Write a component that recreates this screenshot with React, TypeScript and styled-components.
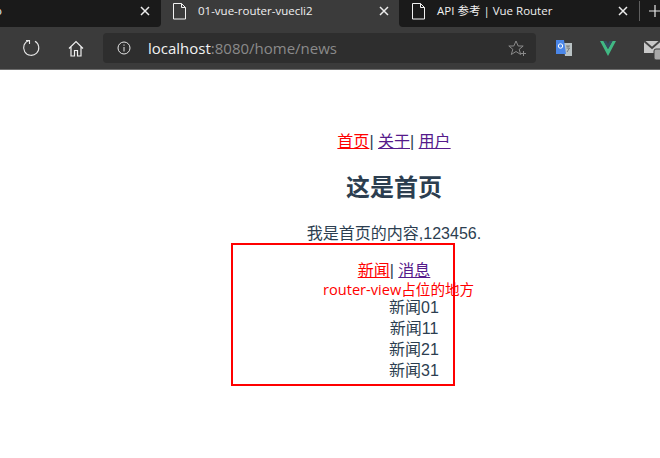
import React from "react";
import styled, { createGlobalStyle } from "styled-components";

const Global = createGlobalStyle`
  html, body { margin: 0; padding: 0; width: 660px; height: 458px; overflow: hidden; background: #fff; }
  body { font-family: "Liberation Sans", "Noto Sans CJK SC", sans-serif; }
`;
const Page = styled.div`width: 660px; height: 458px; position: relative; overflow: hidden;`;
const TabStrip = styled.div`height: 27px; background: #3b3b3b; display: flex; font-family: "Open Sans", "Noto Sans CJK SC", sans-serif;`;
const Tab = styled.div<{ $pad: number }>`
  height: 27px; flex: none; box-sizing: border-box; display: flex; align-items: center;
  color: #f0f0f0; font-size: 11.5px; padding: 0 0 5px ${p => p.$pad}px; white-space: nowrap;
`;
const FirstTab = styled(Tab)`width: 161px; background: #1a1a1a; border-radius: 0 0 4px 0; overflow: hidden;`;
const ActiveTab = styled(Tab)`width: 238px; background: #3b3b3b;`;
const LastTab = styled(Tab)`flex: 1; min-width: 0; background: #1a1a1a; border-radius: 0 0 0 4px;`;
const TabLabel = styled.span<{ $ml: number }>`margin-left: ${p => p.$ml}px; flex: 1; line-height: 22px; height: 22px;`;
const TabClose = styled.svg<{ $mr: number }>`width: 10px; height: 10px; margin-right: ${p => p.$mr}px; flex: none;`;
const Divider = styled.div`width: 1px; height: 20px; background: #5f5f5f; flex: none;`;
const PlusIcon = styled.svg`width: 12px; height: 12px; margin: 0 -1px 0 9px; flex: none;`;
const DocIcon = styled.svg`width: 14px; height: 17px; flex: none;`;
const Toolbar = styled.div`height: 43px; background: #3b3b3b; display: flex; align-items: center; box-sizing: border-box; border-bottom: 1px solid #6d6d6d;`;
const Icon = styled.svg<{ $ml: number; $mr?: number; $mt?: number }>`flex: none; margin: ${p => p.$mt ?? 0}px ${p => p.$mr ?? 0}px 0 ${p => p.$ml}px;`;
const Address = styled.div`width: 433px; height: 30px; margin-left: 19px; background: #2e2e2e; border-radius: 4px; display: flex; align-items: center; flex: none; font-family: "Open Sans", sans-serif; font-size: 15px;`;
const Host = styled.span`color: #f2f2f2; margin-left: 17px;`;
const Path = styled.span`color: #8a8a8a; flex: 1;`;
const Content = styled.div`width: 660px; font-size: 16px; color: #2c3e50; line-height: 21px; display: flex; flex-direction: column; align-items: center; padding-left: 128px; box-sizing: border-box;`;
const Nav = styled.nav`margin-top: 61px; height: 21px; text-align: center; white-space: nowrap;`;
const Link = styled.a<{ $active?: boolean }>`color: ${p => (p.$active ? "#f00" : "#551a8b")}; text-decoration: underline;`;
const Title = styled.h2`font-size: 24px; font-weight: bold; line-height: 28px; margin: 22px 0 0;`;
const Para = styled.p`margin: 21px 0 0; white-space: nowrap;`;
const SubNav = styled(Nav)`margin-top: 16px;`;
const List = styled.ul`list-style: none; margin: 16px 0 0; padding: 0 0 0 40px; text-align: center;`;
const Item = styled.li`height: 21px;`;
const Frame = styled.div`position: absolute; left: 231px; top: 243px; width: 224px; height: 143px; box-sizing: border-box; border: 2px solid #f00;`;
const Note = styled.div`position: absolute; left: 323px; top: 280px; color: #f00; line-height: 18px; white-space: nowrap; font-family: "Open Sans", "Noto Sans CJK SC", sans-serif; font-size: 14.6px;`;

const Close = ({ mr }: { mr: number }) => (
  <TabClose $mr={mr} viewBox="0 0 10 10"><path d="M1 1l8 8M9 1l-8 8" stroke="#ececec" strokeWidth="1.500" fill="none" /></TabClose>
);
const Doc = () => (
  <DocIcon viewBox="0 0 14 17"><path d="M.5.5h8l4 4v11.500H.5zM8.500.5v4h4" fill="none" stroke="#f2f2f2" /></DocIcon>
);

export default function App() {
  return (
    <Page>
      <Global />
      <TabStrip>
        <FirstTab $pad={0}>
          <TabLabel $ml={-5}>o</TabLabel>
          <Close mr={11} />
        </FirstTab>
        <ActiveTab $pad={12}>
          <Doc />
          <TabLabel $ml={11}>01-vue-router-vuecli2</TabLabel>
          <Close mr={10} />
        </ActiveTab>
        <LastTab $pad={13}>
          <Doc />
          <TabLabel $ml={11}>API 参考 | Vue Router</TabLabel>
          <Close mr={11} />
          <Divider />
          <PlusIcon viewBox="0 0 12 12"><path d="M6 0v12M0 6h12" stroke="#e8e8e8" strokeWidth="1.200" /></PlusIcon>
        </LastTab>
      </TabStrip>
      <Toolbar>
        <Icon $ml={22} width="18" height="18" viewBox="0 0 18 18"><path d="M13 2.200A7.600 7.600 0 1 1 7 1.500M4 1.500H7.500V5" fill="none" stroke="#e6e6e6" strokeWidth="1.100" /></Icon>
        <Icon $ml={28} width="16" height="17" viewBox="0 0 16 17"><path d="M1 8.500L8 1.500l7 7M3 7v9h3.500v-5.500h3V16H13V7" fill="none" stroke="#f0f0f0" strokeWidth="1.200" /></Icon>
        <Address>
          <Icon $ml={14} width="14" height="14" viewBox="0 0 14 14"><circle cx="7" cy="7" r="6" fill="none" stroke="#e6e6e6" /><path d="M7 6v4.500M7 3.500v1.200" stroke="#e6e6e6" /></Icon>
          <Host>localhost</Host><Path>:8080/home/news</Path>
          <Icon $ml={0} $mr={10} width="18" height="17" viewBox="0 0 18 17"><path d="M8 1l2.200 5h5l-4 3.300 1.500 5.200L8 11.500l-4.700 3 1.500-5.200L.8 6h5zM13 13.500h5M15.500 11v5" fill="none" stroke="#8a8a8a" /></Icon>
        </Address>
        <Icon $ml={20} width="16" height="16" viewBox="0 0 16 16"><path d="M7 3h9v13H9z" fill="#b9c2c4" /><path d="M10 6h4M12 6v1M10.500 8h3l-2.500 4" fill="none" stroke="#666" strokeWidth=".8" /><path d="M0 0h8l2 14H0z" fill="#4a86e8" /><circle cx="4.500" cy="6" r="2.200" fill="none" stroke="#fff" /></Icon>
        <Icon $ml={28} width="16" height="15" viewBox="0 0 16 15"><path d="M0 0h3.500L8 8l4.500-8H16L8 15z" fill="#41b883" /><path d="M3.500 0H6.500L8 3l1.500-3h3L8 8z" fill="#35495e" /></Icon>
        <Icon $ml={28} $mt={6} width="16" height="20" viewBox="0 0 16 20"><path d="M0 0h16v12H0z" fill="#c8c8c8" /><path d="M0 0l8 7 8-7" fill="none" stroke="#444" strokeWidth="2" /><rect x="10" y="8" width="8" height="11" rx="2" fill="#a8a8a8" stroke="#3b3b3b" /></Icon>
      </Toolbar>
      <Content>
        <Nav>
          <Link $active>首页</Link>| <Link>关于</Link>| <Link>用户</Link>
        </Nav>
        <Title>这是首页</Title>
        <Para>我是首页的内容,123456.</Para>
        <SubNav>
          <Link $active>新闻</Link>| <Link>消息</Link>
        </SubNav>
        <List>
          <Item>新闻01</Item>
          <Item>新闻11</Item>
          <Item>新闻21</Item>
          <Item>新闻31</Item>
        </List>
      </Content>
      <Frame />
      <Note>router-view占位的地方</Note>
    </Page>
  );
}
